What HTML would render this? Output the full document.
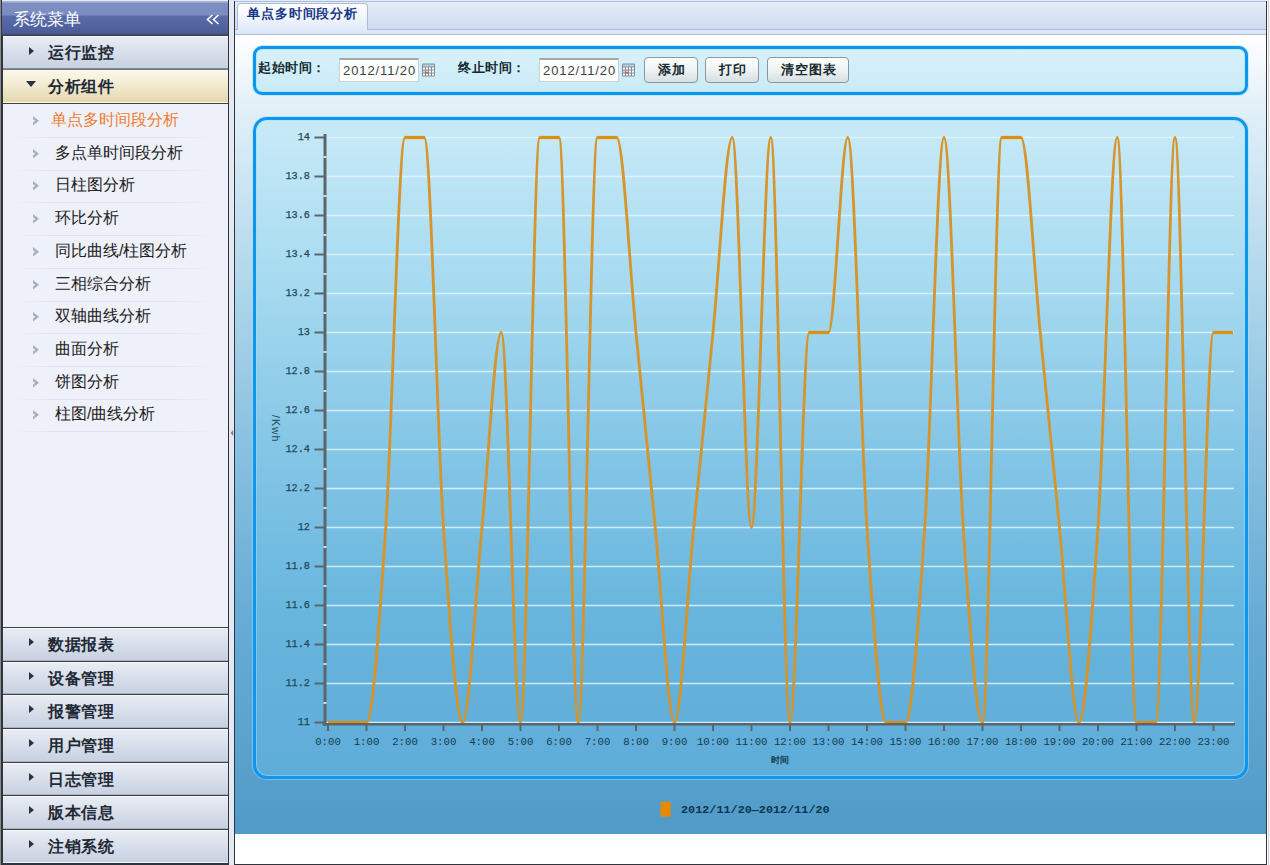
<!DOCTYPE html>
<html><head><meta charset="utf-8">
<style>
*{margin:0;padding:0;box-sizing:border-box}
html,body{width:1270px;height:865px;overflow:hidden}
body{position:relative;background:#e4e9f3;font-family:"Liberation Sans",sans-serif;font-size:12px;color:#222}
.abs{position:absolute}
/* sidebar */
#side{position:absolute;left:0;top:0;width:229px;height:865px;background:#eef1f9;border-right:1px solid #2e3238}
#side .lb0{position:absolute;left:0;top:0;width:1px;height:865px;background:#8a8a88}
#side .lb1{position:absolute;left:1px;top:0;width:2px;height:865px;background:#30343c}
#hdr{position:absolute;left:2px;top:0;width:226px;height:36px;
 background:linear-gradient(#e4ecfa 0,#e4ecfa 1px,#a0acc8 1px,#b0bde0 2px,#7d8fc2 3px,#7a8cc0 15px,#5a6cab 16px,#4d609c 30px,#48598e 34px,#3a4050 35px,#3a4050 36px)}
#hdr .t{position:absolute;left:11px;top:10px;font-size:17px;color:#fff;line-height:20px}
#hdr .c{position:absolute;left:203px;top:8px;font-size:18px;color:#fff;line-height:20px}
.acc{position:absolute;left:3px;width:225px;background:linear-gradient(#f6f8fc 0,#f6f8fc 1px,#e8ecf4 1px,#c8d1e1 calc(100% - 2px),#a9b1ba calc(100% - 2px),#a9b1ba calc(100% - 1px),#3c4246 calc(100% - 1px))}
.acc .tri{position:absolute;left:26px;top:11px;width:0;height:0;border-top:4px solid transparent;border-bottom:4px solid transparent;border-left:5px solid #2a3440}
.acc .tx{position:absolute;left:45px;top:7px;font-size:16px;font-weight:bold;color:#1e2a36;line-height:20px;letter-spacing:0.5px}
.acc.b .tri{top:10px}
.acc.open{background:linear-gradient(#fbf8ea 0,#f5eed6 35%,#e5d8ae calc(100% - 2px),#fdfcf4 calc(100% - 2px),#fdfcf4 calc(100% - 1px),#40403a calc(100% - 1px))}
.acc.open .tri{left:23px;top:11px;border-top:6px solid #2a3440;border-left:5px solid transparent;border-right:5px solid transparent;border-bottom:0}
.sub{position:absolute;left:3px;width:200px;height:33px}
.sub .ar{position:absolute;left:30px;top:13px;width:6px;height:10px}
.sub .tx{position:absolute;left:52px;top:7px;font-size:16px;color:#222;line-height:20px}
.sub.sel .tx{left:48px;color:#ee7d32}
.sub .sep{position:absolute;left:10px;top:34px;width:200px;height:1px;background:linear-gradient(90deg,rgba(220,225,238,0),#dfe3ee 20%,#dfe3ee 80%,rgba(220,225,238,0))}
/* content */
#main{position:absolute;left:234px;top:1px;width:1033px;height:864px;border-left:1px solid #30343c;border-right:1px solid #30343c;border-bottom:1px solid #30343c;background:#fff;overflow:hidden}
#tabbar{position:absolute;left:0;top:0;width:1031px;height:34px;background:linear-gradient(#adbedb 0,#adbedb 1px,#e6ecf9 1px,#cedbf1 28px,#a8bcdc 28px,#a8bcdc 29px,#dfeafb 29px,#d9e5f7 33px,#aebfd8 33px,#aebfd8 34px)}
#tab{position:absolute;left:2px;top:2px;width:131px;height:27px;border:1px solid #a9bcd8;border-bottom:0;border-radius:4px 4px 0 0;background:linear-gradient(#ffffff,#f2f6fc 50%,#e0eaf9)}
#tab .tx{position:absolute;left:9px;top:2px;font-size:13px;font-weight:bold;color:#17378a;line-height:16px;letter-spacing:0.9px}
#bg{position:absolute;left:0;top:34px;width:1031px;height:799px;background:linear-gradient(#ffffff 0,#e2f0f8 9%,#b4d9ec 29%,#88c0e0 52%,#64aad4 75%,#5aa2cc 90%,#4f9ac8 100%)}
#qp{position:absolute;left:18px;top:45px;width:995px;height:49px;border:3px solid #0f95ee;box-shadow:0 0 0 1px rgba(150,225,255,.55),inset 0 0 0 1px rgba(150,225,255,.55);border-radius:9px;background:linear-gradient(#d8f1fa,#c9ebf7)}
.lbl{position:absolute;font-size:13px;font-weight:bold;color:#172a30;line-height:14px;letter-spacing:0.5px}
.inp{position:absolute;width:80px;height:24px;background:#fff;border:1px solid #c8d2d2;border-top:2px solid #9ea8a8;font-size:13px;color:#3a4242;line-height:21px;padding-left:3px;letter-spacing:0.9px}
.cal{position:absolute;width:13px;height:14px}
.btn{position:absolute;height:26px;border:1px solid #8c979b;border-radius:4px;background:linear-gradient(#fdfefe,#eef3f4 50%,#d6dfe2);font-size:13px;font-weight:bold;color:#172a30;text-align:center;line-height:24px;letter-spacing:1px;text-indent:1px}
#cp{position:absolute;left:18px;top:116px;width:995px;height:662px;border:3px solid #0f95ee;box-shadow:0 0 0 1px rgba(150,225,255,.5),inset 0 0 0 1px rgba(150,225,255,.5);border-radius:14px;background:linear-gradient(#c8eaf7 0%,#a6daf0 25%,#84c6e6 50%,#68b6de 75%,#5eacd8 100%)}
svg text{font-family:"Liberation Mono",monospace}
</style></head><body>
<div id="side">
  <div class="lb0"></div><div class="lb1"></div>
  <div id="hdr"><div class="t">系统菜单</div><svg class="abs" style="left:204px;top:14px" width="14" height="12" viewBox="0 0 14 12"><path d="M6.5,1 L1.5,5.5 L6.5,10 M12.5,1 L7.5,5.5 L12.5,10" fill="none" stroke="#fff" stroke-width="1.6"/></svg></div>
  <div class="acc" style="top:36px;height:34px;background:linear-gradient(#f6f8fc 0,#f6f8fc 1px,#e8ecf4 1px,#c8d1e1 calc(100% - 2px),#8a9098 calc(100% - 2px),#6a7078 100%)"><div class="tri"></div><div class="tx">运行监控</div></div>
  <div class="acc open" style="top:70px;height:34px"><div class="tri"></div><div class="tx">分析组件</div></div>
  <div class="sub sel" style="top:103px"><svg class="ar" viewBox="0 0 6 10" width="6" height="10"><path d="M0,0 L6,4.8 L0,9.6 L0,6.4 L2.2,4.8 L0,3.2 Z" fill="#a8b0c0"/></svg><div class="tx">单点多时间段分析</div><div class="sep"></div></div>
<div class="sub" style="top:136px"><svg class="ar" viewBox="0 0 6 10" width="6" height="10"><path d="M0,0 L6,4.8 L0,9.6 L0,6.4 L2.2,4.8 L0,3.2 Z" fill="#a8b0c0"/></svg><div class="tx">多点单时间段分析</div><div class="sep"></div></div>
<div class="sub" style="top:168px"><svg class="ar" viewBox="0 0 6 10" width="6" height="10"><path d="M0,0 L6,4.8 L0,9.6 L0,6.4 L2.2,4.8 L0,3.2 Z" fill="#a8b0c0"/></svg><div class="tx">日柱图分析</div><div class="sep"></div></div>
<div class="sub" style="top:201px"><svg class="ar" viewBox="0 0 6 10" width="6" height="10"><path d="M0,0 L6,4.8 L0,9.6 L0,6.4 L2.2,4.8 L0,3.2 Z" fill="#a8b0c0"/></svg><div class="tx">环比分析</div><div class="sep"></div></div>
<div class="sub" style="top:234px"><svg class="ar" viewBox="0 0 6 10" width="6" height="10"><path d="M0,0 L6,4.8 L0,9.6 L0,6.4 L2.2,4.8 L0,3.2 Z" fill="#a8b0c0"/></svg><div class="tx">同比曲线/柱图分析</div><div class="sep"></div></div>
<div class="sub" style="top:267px"><svg class="ar" viewBox="0 0 6 10" width="6" height="10"><path d="M0,0 L6,4.8 L0,9.6 L0,6.4 L2.2,4.8 L0,3.2 Z" fill="#a8b0c0"/></svg><div class="tx">三相综合分析</div><div class="sep"></div></div>
<div class="sub" style="top:299px"><svg class="ar" viewBox="0 0 6 10" width="6" height="10"><path d="M0,0 L6,4.8 L0,9.6 L0,6.4 L2.2,4.8 L0,3.2 Z" fill="#a8b0c0"/></svg><div class="tx">双轴曲线分析</div><div class="sep"></div></div>
<div class="sub" style="top:332px"><svg class="ar" viewBox="0 0 6 10" width="6" height="10"><path d="M0,0 L6,4.8 L0,9.6 L0,6.4 L2.2,4.8 L0,3.2 Z" fill="#a8b0c0"/></svg><div class="tx">曲面分析</div><div class="sep"></div></div>
<div class="sub" style="top:365px"><svg class="ar" viewBox="0 0 6 10" width="6" height="10"><path d="M0,0 L6,4.8 L0,9.6 L0,6.4 L2.2,4.8 L0,3.2 Z" fill="#a8b0c0"/></svg><div class="tx">饼图分析</div><div class="sep"></div></div>
<div class="sub" style="top:397px"><svg class="ar" viewBox="0 0 6 10" width="6" height="10"><path d="M0,0 L6,4.8 L0,9.6 L0,6.4 L2.2,4.8 L0,3.2 Z" fill="#a8b0c0"/></svg><div class="tx">柱图/曲线分析</div><div class="sep"></div></div>

  <div class="abs" style="left:3px;top:627px;width:225px;height:1px;background:#3c4246"></div>
  <div class="acc b" style="top:628px;height:34px"><div class="tri"></div><div class="tx">数据报表</div></div>
<div class="acc b" style="top:662px;height:33px"><div class="tri"></div><div class="tx">设备管理</div></div>
<div class="acc b" style="top:695px;height:34px"><div class="tri"></div><div class="tx">报警管理</div></div>
<div class="acc b" style="top:729px;height:34px"><div class="tri"></div><div class="tx">用户管理</div></div>
<div class="acc b" style="top:763px;height:33px"><div class="tri"></div><div class="tx">日志管理</div></div>
<div class="acc b" style="top:796px;height:34px"><div class="tri"></div><div class="tx">版本信息</div></div>
<div class="acc b" style="top:830px;height:34px;background:linear-gradient(#f6f8fc 0,#f6f8fc 1px,#e8ecf4 1px,#c8d1e1 calc(100% - 2px),#f4f6fa calc(100% - 2px),#f4f6fa calc(100% - 1px),#30343c calc(100% - 1px))"><div class="tri"></div><div class="tx">注销系统</div></div>

  <div class="abs" style="left:1px;top:864px;width:228px;height:1px;background:#30343c"></div>
</div>
<div class="abs" style="left:1267px;top:0;width:3px;height:865px;background:linear-gradient(90deg,#fff 0,#fff 1px,#d4d4d2 1px,#d4d4d2 2px,#f4f4f4 2px)"></div>
<svg class="abs" style="left:230px;top:429px" width="4" height="8" viewBox="0 0 4 8"><path d="M3.2,1 L0.6,4 L3.2,7 Z" fill="#7c7c80"/></svg>
<div id="main">
  <div id="tabbar"></div>
  <div id="tab"><div class="tx">单点多时间段分析</div></div>
  <div id="bg"></div>
  <div id="qp"></div>
  <div class="lbl" style="left:23px;top:60px">起始时间：</div>
  <div class="inp" style="left:104px;top:57px">2012/11/20</div>
  <svg class="cal" style="left:187px;top:62px" viewBox="0 0 13 13" width="13" height="13"><rect x="0" y="0" width="13" height="13" rx="1.2" fill="#7f9096"/><rect x="1" y="1" width="11" height="2" fill="#b8cde0"/><rect x="1" y="4" width="2" height="2" fill="#ffffff"/><rect x="1" y="7" width="2" height="2" fill="#f4c8cc"/><rect x="1" y="10" width="2" height="2" fill="#ffffff"/><rect x="4" y="4" width="2" height="2" fill="#ffffff"/><rect x="4" y="7" width="2" height="2" fill="#f4c8cc"/><rect x="4" y="10" width="2" height="2" fill="#ffffff"/><rect x="7" y="4" width="2" height="2" fill="#ffffff"/><rect x="7" y="7" width="2" height="2" fill="#ffffff"/><rect x="7" y="10" width="2" height="2" fill="#ffffff"/><rect x="10" y="4" width="2" height="2" fill="#ffffff"/><rect x="10" y="7" width="2" height="2" fill="#ffffff"/><rect x="10" y="10" width="2" height="2" fill="#ffffff"/><rect x="3" y="8.6" width="4" height="1.6" fill="#d85a6a"/></svg>
  <div class="lbl" style="left:223px;top:60px">终止时间：</div>
  <div class="inp" style="left:304px;top:57px">2012/11/20</div>
  <svg class="cal" style="left:387px;top:62px" viewBox="0 0 13 13" width="13" height="13"><rect x="0" y="0" width="13" height="13" rx="1.2" fill="#7f9096"/><rect x="1" y="1" width="11" height="2" fill="#b8cde0"/><rect x="1" y="4" width="2" height="2" fill="#ffffff"/><rect x="1" y="7" width="2" height="2" fill="#f4c8cc"/><rect x="1" y="10" width="2" height="2" fill="#ffffff"/><rect x="4" y="4" width="2" height="2" fill="#ffffff"/><rect x="4" y="7" width="2" height="2" fill="#f4c8cc"/><rect x="4" y="10" width="2" height="2" fill="#ffffff"/><rect x="7" y="4" width="2" height="2" fill="#ffffff"/><rect x="7" y="7" width="2" height="2" fill="#ffffff"/><rect x="7" y="10" width="2" height="2" fill="#ffffff"/><rect x="10" y="4" width="2" height="2" fill="#ffffff"/><rect x="10" y="7" width="2" height="2" fill="#ffffff"/><rect x="10" y="10" width="2" height="2" fill="#ffffff"/><rect x="3" y="8.6" width="4" height="1.6" fill="#d85a6a"/></svg>
  <div class="btn" style="left:409px;top:56px;width:54px">添加</div>
  <div class="btn" style="left:470px;top:56px;width:54px">打印</div>
  <div class="btn" style="left:532px;top:56px;width:82px">清空图表</div>
  <div id="cp"></div>
</div>
<svg class="abs" style="left:0;top:0" width="1270" height="865" viewBox="0 0 1270 865"><line x1="326" y1="137.5" x2="1234" y2="137.5" stroke="#e2f6ff" stroke-opacity="0.85" stroke-width="1.6"/><line x1="326" y1="176.5" x2="1234" y2="176.5" stroke="#e2f6ff" stroke-opacity="0.85" stroke-width="1.6"/><line x1="326" y1="215.5" x2="1234" y2="215.5" stroke="#e2f6ff" stroke-opacity="0.85" stroke-width="1.6"/><line x1="326" y1="254.5" x2="1234" y2="254.5" stroke="#e2f6ff" stroke-opacity="0.85" stroke-width="1.6"/><line x1="326" y1="293.5" x2="1234" y2="293.5" stroke="#e2f6ff" stroke-opacity="0.85" stroke-width="1.6"/><line x1="326" y1="332.5" x2="1234" y2="332.5" stroke="#e2f6ff" stroke-opacity="0.85" stroke-width="1.6"/><line x1="326" y1="371.5" x2="1234" y2="371.5" stroke="#e2f6ff" stroke-opacity="0.85" stroke-width="1.6"/><line x1="326" y1="410.5" x2="1234" y2="410.5" stroke="#e2f6ff" stroke-opacity="0.85" stroke-width="1.6"/><line x1="326" y1="449.5" x2="1234" y2="449.5" stroke="#e2f6ff" stroke-opacity="0.85" stroke-width="1.6"/><line x1="326" y1="488.5" x2="1234" y2="488.5" stroke="#e2f6ff" stroke-opacity="0.85" stroke-width="1.6"/><line x1="326" y1="527.5" x2="1234" y2="527.5" stroke="#e2f6ff" stroke-opacity="0.85" stroke-width="1.6"/><line x1="326" y1="566.5" x2="1234" y2="566.5" stroke="#e2f6ff" stroke-opacity="0.85" stroke-width="1.6"/><line x1="326" y1="605.5" x2="1234" y2="605.5" stroke="#e2f6ff" stroke-opacity="0.85" stroke-width="1.6"/><line x1="326" y1="644.5" x2="1234" y2="644.5" stroke="#e2f6ff" stroke-opacity="0.85" stroke-width="1.6"/><line x1="326" y1="683.5" x2="1234" y2="683.5" stroke="#e2f6ff" stroke-opacity="0.85" stroke-width="1.6"/><line x1="326" y1="722.5" x2="1234" y2="722.5" stroke="#e2f6ff" stroke-opacity="0.85" stroke-width="1.6"/><path d="M328.00,722.50 C334.42,722.50 340.83,722.50 347.25,722.50 C353.67,722.50 360.08,722.50 366.50,722.50 C372.92,722.50 379.33,625.00 385.75,527.50 C392.17,430.00 398.58,137.50 405.00,137.50 C411.42,137.50 417.83,137.50 424.25,137.50 C430.67,137.50 437.08,430.00 443.50,527.50 C449.92,625.00 456.33,722.50 462.75,722.50 C469.17,722.50 475.58,592.50 482.00,527.50 C488.42,462.50 494.83,332.50 501.25,332.50 C507.67,332.50 514.08,722.50 520.50,722.50 C526.92,722.50 533.33,137.50 539.75,137.50 C546.17,137.50 552.58,137.50 559.00,137.50 C565.42,137.50 571.83,722.50 578.25,722.50 C584.67,722.50 591.08,137.50 597.50,137.50 C603.92,137.50 610.33,137.50 616.75,137.50 C623.17,137.50 629.58,267.50 636.00,332.50 C642.42,397.50 648.83,462.50 655.25,527.50 C661.67,592.50 668.08,722.50 674.50,722.50 C680.92,722.50 687.33,592.50 693.75,527.50 C700.17,462.50 706.58,397.50 713.00,332.50 C719.42,267.50 725.83,137.50 732.25,137.50 C738.67,137.50 745.08,527.50 751.50,527.50 C757.92,527.50 764.33,137.50 770.75,137.50 C777.17,137.50 783.58,722.50 790.00,722.50 C796.42,722.50 802.83,332.50 809.25,332.50 C815.67,332.50 822.08,332.50 828.50,332.50 C834.92,332.50 841.33,137.50 847.75,137.50 C854.17,137.50 860.58,430.00 867.00,527.50 C873.42,625.00 879.83,722.50 886.25,722.50 C892.67,722.50 899.08,722.50 905.50,722.50 C911.92,722.50 918.33,625.00 924.75,527.50 C931.17,430.00 937.58,137.50 944.00,137.50 C950.42,137.50 956.83,430.00 963.25,527.50 C969.67,625.00 976.08,722.50 982.50,722.50 C988.92,722.50 995.33,137.50 1001.75,137.50 C1008.17,137.50 1014.58,137.50 1021.00,137.50 C1027.42,137.50 1033.83,267.50 1040.25,332.50 C1046.67,397.50 1053.08,462.50 1059.50,527.50 C1065.92,592.50 1072.33,722.50 1078.75,722.50 C1085.17,722.50 1091.58,625.00 1098.00,527.50 C1104.42,430.00 1110.83,137.50 1117.25,137.50 C1123.67,137.50 1130.08,722.50 1136.50,722.50 C1142.92,722.50 1149.33,722.50 1155.75,722.50 C1162.17,722.50 1168.58,137.50 1175.00,137.50 C1181.42,137.50 1187.83,722.50 1194.25,722.50 C1200.67,722.50 1207.08,332.50 1213.50,332.50 C1219.92,332.50 1226.33,332.50 1232.75,332.50" fill="none" stroke="#d6942a" stroke-width="2.8" stroke-linejoin="round"/><line x1="328.0" y1="722.5" x2="347.2" y2="722.5" stroke="#e08e10" stroke-width="3.2"/><line x1="347.2" y1="722.5" x2="366.5" y2="722.5" stroke="#e08e10" stroke-width="3.2"/><line x1="405.0" y1="137.5" x2="424.2" y2="137.5" stroke="#e08e10" stroke-width="3.2"/><line x1="539.8" y1="137.5" x2="559.0" y2="137.5" stroke="#e08e10" stroke-width="3.2"/><line x1="597.5" y1="137.5" x2="616.8" y2="137.5" stroke="#e08e10" stroke-width="3.2"/><line x1="809.2" y1="332.5" x2="828.5" y2="332.5" stroke="#e08e10" stroke-width="3.2"/><line x1="886.2" y1="722.5" x2="905.5" y2="722.5" stroke="#e08e10" stroke-width="3.2"/><line x1="1001.8" y1="137.5" x2="1021.0" y2="137.5" stroke="#e08e10" stroke-width="3.2"/><line x1="1136.5" y1="722.5" x2="1155.8" y2="722.5" stroke="#e08e10" stroke-width="3.2"/><line x1="1213.5" y1="332.5" x2="1232.8" y2="332.5" stroke="#e08e10" stroke-width="3.2"/><line x1="325" y1="134" x2="325" y2="725.5" stroke="#5c666a" stroke-width="3"/><line x1="322.5" y1="724.2" x2="1235" y2="724.2" stroke="#5c666a" stroke-width="2.6"/><line x1="314.5" y1="137.5" x2="324" y2="137.5" stroke="#5c666a" stroke-width="2"/><line x1="323.5" y1="157.0" x2="326.5" y2="157.0" stroke="#f4f8f8" stroke-width="1.6"/><line x1="314.5" y1="176.5" x2="324" y2="176.5" stroke="#5c666a" stroke-width="2"/><line x1="323.5" y1="196.0" x2="326.5" y2="196.0" stroke="#f4f8f8" stroke-width="1.6"/><line x1="314.5" y1="215.5" x2="324" y2="215.5" stroke="#5c666a" stroke-width="2"/><line x1="323.5" y1="235.0" x2="326.5" y2="235.0" stroke="#f4f8f8" stroke-width="1.6"/><line x1="314.5" y1="254.5" x2="324" y2="254.5" stroke="#5c666a" stroke-width="2"/><line x1="323.5" y1="274.0" x2="326.5" y2="274.0" stroke="#f4f8f8" stroke-width="1.6"/><line x1="314.5" y1="293.5" x2="324" y2="293.5" stroke="#5c666a" stroke-width="2"/><line x1="323.5" y1="313.0" x2="326.5" y2="313.0" stroke="#f4f8f8" stroke-width="1.6"/><line x1="314.5" y1="332.5" x2="324" y2="332.5" stroke="#5c666a" stroke-width="2"/><line x1="323.5" y1="352.0" x2="326.5" y2="352.0" stroke="#f4f8f8" stroke-width="1.6"/><line x1="314.5" y1="371.5" x2="324" y2="371.5" stroke="#5c666a" stroke-width="2"/><line x1="323.5" y1="391.0" x2="326.5" y2="391.0" stroke="#f4f8f8" stroke-width="1.6"/><line x1="314.5" y1="410.5" x2="324" y2="410.5" stroke="#5c666a" stroke-width="2"/><line x1="323.5" y1="430.0" x2="326.5" y2="430.0" stroke="#f4f8f8" stroke-width="1.6"/><line x1="314.5" y1="449.5" x2="324" y2="449.5" stroke="#5c666a" stroke-width="2"/><line x1="323.5" y1="469.0" x2="326.5" y2="469.0" stroke="#f4f8f8" stroke-width="1.6"/><line x1="314.5" y1="488.5" x2="324" y2="488.5" stroke="#5c666a" stroke-width="2"/><line x1="323.5" y1="508.0" x2="326.5" y2="508.0" stroke="#f4f8f8" stroke-width="1.6"/><line x1="314.5" y1="527.5" x2="324" y2="527.5" stroke="#5c666a" stroke-width="2"/><line x1="323.5" y1="547.0" x2="326.5" y2="547.0" stroke="#f4f8f8" stroke-width="1.6"/><line x1="314.5" y1="566.5" x2="324" y2="566.5" stroke="#5c666a" stroke-width="2"/><line x1="323.5" y1="586.0" x2="326.5" y2="586.0" stroke="#f4f8f8" stroke-width="1.6"/><line x1="314.5" y1="605.5" x2="324" y2="605.5" stroke="#5c666a" stroke-width="2"/><line x1="323.5" y1="625.0" x2="326.5" y2="625.0" stroke="#f4f8f8" stroke-width="1.6"/><line x1="314.5" y1="644.5" x2="324" y2="644.5" stroke="#5c666a" stroke-width="2"/><line x1="323.5" y1="664.0" x2="326.5" y2="664.0" stroke="#f4f8f8" stroke-width="1.6"/><line x1="314.5" y1="683.5" x2="324" y2="683.5" stroke="#5c666a" stroke-width="2"/><line x1="323.5" y1="703.0" x2="326.5" y2="703.0" stroke="#f4f8f8" stroke-width="1.6"/><line x1="314.5" y1="722.5" x2="324" y2="722.5" stroke="#5c666a" stroke-width="2"/><text x="309.9" y="140.3" text-anchor="end" font-size="10.2" font-weight="normal" stroke="#1e4858" stroke-width="0.25" fill="#1e4858" style="font-family:'Liberation Mono',monospace">14</text><text x="309.9" y="179.3" text-anchor="end" font-size="10.2" font-weight="normal" stroke="#1e4858" stroke-width="0.25" fill="#1e4858" style="font-family:'Liberation Mono',monospace">13.8</text><text x="309.9" y="218.3" text-anchor="end" font-size="10.2" font-weight="normal" stroke="#1e4858" stroke-width="0.25" fill="#1e4858" style="font-family:'Liberation Mono',monospace">13.6</text><text x="309.9" y="257.3" text-anchor="end" font-size="10.2" font-weight="normal" stroke="#1e4858" stroke-width="0.25" fill="#1e4858" style="font-family:'Liberation Mono',monospace">13.4</text><text x="309.9" y="296.3" text-anchor="end" font-size="10.2" font-weight="normal" stroke="#1e4858" stroke-width="0.25" fill="#1e4858" style="font-family:'Liberation Mono',monospace">13.2</text><text x="309.9" y="335.3" text-anchor="end" font-size="10.2" font-weight="normal" stroke="#1e4858" stroke-width="0.25" fill="#1e4858" style="font-family:'Liberation Mono',monospace">13</text><text x="309.9" y="374.3" text-anchor="end" font-size="10.2" font-weight="normal" stroke="#1e4858" stroke-width="0.25" fill="#1e4858" style="font-family:'Liberation Mono',monospace">12.8</text><text x="309.9" y="413.3" text-anchor="end" font-size="10.2" font-weight="normal" stroke="#1e4858" stroke-width="0.25" fill="#1e4858" style="font-family:'Liberation Mono',monospace">12.6</text><text x="309.9" y="452.3" text-anchor="end" font-size="10.2" font-weight="normal" stroke="#1e4858" stroke-width="0.25" fill="#1e4858" style="font-family:'Liberation Mono',monospace">12.4</text><text x="309.9" y="491.3" text-anchor="end" font-size="10.2" font-weight="normal" stroke="#1e4858" stroke-width="0.25" fill="#1e4858" style="font-family:'Liberation Mono',monospace">12.2</text><text x="309.9" y="530.3" text-anchor="end" font-size="10.2" font-weight="normal" stroke="#1e4858" stroke-width="0.25" fill="#1e4858" style="font-family:'Liberation Mono',monospace">12</text><text x="309.9" y="569.3" text-anchor="end" font-size="10.2" font-weight="normal" stroke="#1e4858" stroke-width="0.25" fill="#1e4858" style="font-family:'Liberation Mono',monospace">11.8</text><text x="309.9" y="608.3" text-anchor="end" font-size="10.2" font-weight="normal" stroke="#1e4858" stroke-width="0.25" fill="#1e4858" style="font-family:'Liberation Mono',monospace">11.6</text><text x="309.9" y="647.3" text-anchor="end" font-size="10.2" font-weight="normal" stroke="#1e4858" stroke-width="0.25" fill="#1e4858" style="font-family:'Liberation Mono',monospace">11.4</text><text x="309.9" y="686.3" text-anchor="end" font-size="10.2" font-weight="normal" stroke="#1e4858" stroke-width="0.25" fill="#1e4858" style="font-family:'Liberation Mono',monospace">11.2</text><text x="309.9" y="725.3" text-anchor="end" font-size="10.2" font-weight="normal" stroke="#1e4858" stroke-width="0.25" fill="#1e4858" style="font-family:'Liberation Mono',monospace">11</text><line x1="328.0" y1="725" x2="328.0" y2="731" stroke="#5c666a" stroke-width="2"/><text x="328.0" y="745" text-anchor="middle" font-size="10.7" fill="#133d50" style="font-family:'Liberation Mono',monospace">0:00</text><line x1="366.5" y1="725" x2="366.5" y2="731" stroke="#5c666a" stroke-width="2"/><text x="366.5" y="745" text-anchor="middle" font-size="10.7" fill="#133d50" style="font-family:'Liberation Mono',monospace">1:00</text><line x1="405.0" y1="725" x2="405.0" y2="731" stroke="#5c666a" stroke-width="2"/><text x="405.0" y="745" text-anchor="middle" font-size="10.7" fill="#133d50" style="font-family:'Liberation Mono',monospace">2:00</text><line x1="443.5" y1="725" x2="443.5" y2="731" stroke="#5c666a" stroke-width="2"/><text x="443.5" y="745" text-anchor="middle" font-size="10.7" fill="#133d50" style="font-family:'Liberation Mono',monospace">3:00</text><line x1="482.0" y1="725" x2="482.0" y2="731" stroke="#5c666a" stroke-width="2"/><text x="482.0" y="745" text-anchor="middle" font-size="10.7" fill="#133d50" style="font-family:'Liberation Mono',monospace">4:00</text><line x1="520.5" y1="725" x2="520.5" y2="731" stroke="#5c666a" stroke-width="2"/><text x="520.5" y="745" text-anchor="middle" font-size="10.7" fill="#133d50" style="font-family:'Liberation Mono',monospace">5:00</text><line x1="559.0" y1="725" x2="559.0" y2="731" stroke="#5c666a" stroke-width="2"/><text x="559.0" y="745" text-anchor="middle" font-size="10.7" fill="#133d50" style="font-family:'Liberation Mono',monospace">6:00</text><line x1="597.5" y1="725" x2="597.5" y2="731" stroke="#5c666a" stroke-width="2"/><text x="597.5" y="745" text-anchor="middle" font-size="10.7" fill="#133d50" style="font-family:'Liberation Mono',monospace">7:00</text><line x1="636.0" y1="725" x2="636.0" y2="731" stroke="#5c666a" stroke-width="2"/><text x="636.0" y="745" text-anchor="middle" font-size="10.7" fill="#133d50" style="font-family:'Liberation Mono',monospace">8:00</text><line x1="674.5" y1="725" x2="674.5" y2="731" stroke="#5c666a" stroke-width="2"/><text x="674.5" y="745" text-anchor="middle" font-size="10.7" fill="#133d50" style="font-family:'Liberation Mono',monospace">9:00</text><line x1="713.0" y1="725" x2="713.0" y2="731" stroke="#5c666a" stroke-width="2"/><text x="713.0" y="745" text-anchor="middle" font-size="10.7" fill="#133d50" style="font-family:'Liberation Mono',monospace">10:00</text><line x1="751.5" y1="725" x2="751.5" y2="731" stroke="#5c666a" stroke-width="2"/><text x="751.5" y="745" text-anchor="middle" font-size="10.7" fill="#133d50" style="font-family:'Liberation Mono',monospace">11:00</text><line x1="790.0" y1="725" x2="790.0" y2="731" stroke="#5c666a" stroke-width="2"/><text x="790.0" y="745" text-anchor="middle" font-size="10.7" fill="#133d50" style="font-family:'Liberation Mono',monospace">12:00</text><line x1="828.5" y1="725" x2="828.5" y2="731" stroke="#5c666a" stroke-width="2"/><text x="828.5" y="745" text-anchor="middle" font-size="10.7" fill="#133d50" style="font-family:'Liberation Mono',monospace">13:00</text><line x1="867.0" y1="725" x2="867.0" y2="731" stroke="#5c666a" stroke-width="2"/><text x="867.0" y="745" text-anchor="middle" font-size="10.7" fill="#133d50" style="font-family:'Liberation Mono',monospace">14:00</text><line x1="905.5" y1="725" x2="905.5" y2="731" stroke="#5c666a" stroke-width="2"/><text x="905.5" y="745" text-anchor="middle" font-size="10.7" fill="#133d50" style="font-family:'Liberation Mono',monospace">15:00</text><line x1="944.0" y1="725" x2="944.0" y2="731" stroke="#5c666a" stroke-width="2"/><text x="944.0" y="745" text-anchor="middle" font-size="10.7" fill="#133d50" style="font-family:'Liberation Mono',monospace">16:00</text><line x1="982.5" y1="725" x2="982.5" y2="731" stroke="#5c666a" stroke-width="2"/><text x="982.5" y="745" text-anchor="middle" font-size="10.7" fill="#133d50" style="font-family:'Liberation Mono',monospace">17:00</text><line x1="1021.0" y1="725" x2="1021.0" y2="731" stroke="#5c666a" stroke-width="2"/><text x="1021.0" y="745" text-anchor="middle" font-size="10.7" fill="#133d50" style="font-family:'Liberation Mono',monospace">18:00</text><line x1="1059.5" y1="725" x2="1059.5" y2="731" stroke="#5c666a" stroke-width="2"/><text x="1059.5" y="745" text-anchor="middle" font-size="10.7" fill="#133d50" style="font-family:'Liberation Mono',monospace">19:00</text><line x1="1098.0" y1="725" x2="1098.0" y2="731" stroke="#5c666a" stroke-width="2"/><text x="1098.0" y="745" text-anchor="middle" font-size="10.7" fill="#133d50" style="font-family:'Liberation Mono',monospace">20:00</text><line x1="1136.5" y1="725" x2="1136.5" y2="731" stroke="#5c666a" stroke-width="2"/><text x="1136.5" y="745" text-anchor="middle" font-size="10.7" fill="#133d50" style="font-family:'Liberation Mono',monospace">21:00</text><line x1="1175.0" y1="725" x2="1175.0" y2="731" stroke="#5c666a" stroke-width="2"/><text x="1175.0" y="745" text-anchor="middle" font-size="10.7" fill="#133d50" style="font-family:'Liberation Mono',monospace">22:00</text><line x1="1213.5" y1="725" x2="1213.5" y2="731" stroke="#5c666a" stroke-width="2"/><text x="1213.5" y="745" text-anchor="middle" font-size="10.7" fill="#133d50" style="font-family:'Liberation Mono',monospace">23:00</text><text x="780" y="763" text-anchor="middle" font-size="9" font-weight="bold" fill="#133d50" style="font-family:'Liberation Sans',sans-serif">时间</text><text x="0" y="0" transform="translate(272,415) rotate(90)" font-size="10.5" letter-spacing="1" fill="#1a4a5c" style="font-family:'Liberation Sans',sans-serif">/Kwh</text><rect x="660.5" y="801.8" width="10.2" height="15" rx="1" fill="#e88a00"/><text x="681" y="813" font-size="11.8" font-weight="bold" fill="#0e3550" style="font-family:'Liberation Mono',monospace">2012/11/20—2012/11/20</text></svg>
</body></html>
